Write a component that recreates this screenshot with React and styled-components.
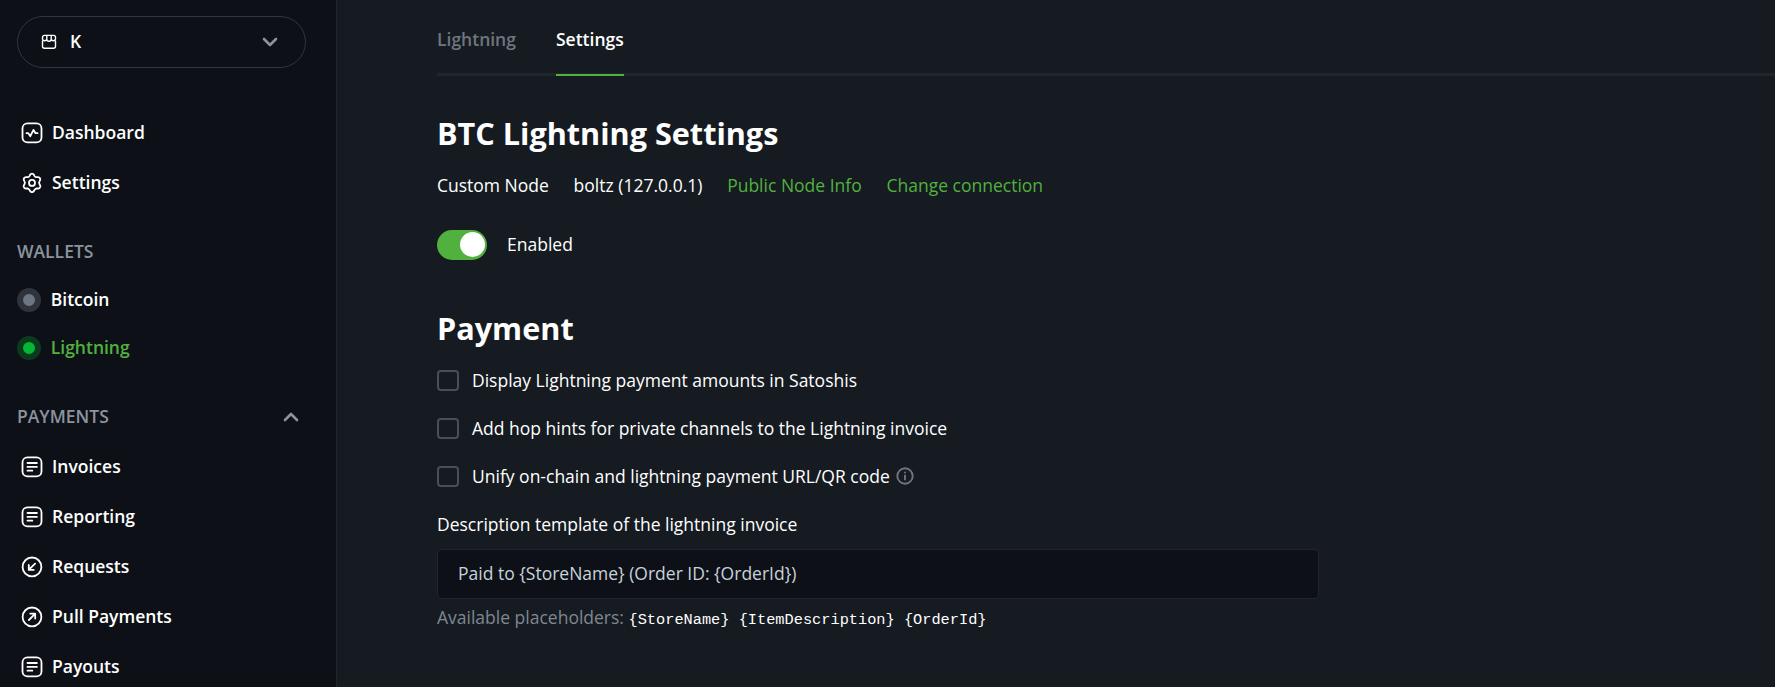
import React from "react";
import styled, { createGlobalStyle, css } from "styled-components";

const c = {
  side: "#0d1117",
  bg: "#161b22",
  line: "#21262d",
  pill: "#30363d",
  muted: "#8b949e",
  dim: "#6e7681",
  green: "#51b13e",
};

const Global = createGlobalStyle`
  * { box-sizing: border-box; }
  body {
    margin: 0;
    background: ${c.bg};
    color: #fff;
    font: 400 17.5px/26px "Open Sans", sans-serif;
    overflow: hidden;
  }
`;

const Page = styled.div`
  display: flex;
  height: 100vh;
  overflow: hidden;
`;

const Sidebar = styled.nav`
  flex: none;
  width: 337px;
  padding: 16px 30px 0 17px;
  background: ${c.side};
  border-right: 1px solid ${c.line};
  font-weight: 600;
`;

const StoreSelector = styled.button`
  display: flex;
  align-items: center;
  width: 289px;
  height: 52px;
  padding: 0 27px 0 23px;
  border: 1px solid ${c.pill};
  border-radius: 26px;
  background: none;
  color: #fff;
  font: inherit;
`;

const StoreName = styled.span`
  flex: 1;
  margin: 0 0 2px 13px;
  text-align: left;
`;

const NavList = styled.ul`
  list-style: none;
  margin: ${(p) => p.$top || 0}px 0 0;
  padding: 0;
`;

const NavItem = styled.li`
  display: flex;
  align-items: center;
  gap: ${(p) => (p.$wallet ? 9.75 : 9)}px;
  height: ${(p) => (p.$wallet ? 48 : 50)}px;
  padding-left: ${(p) => (p.$wallet ? 0 : 4)}px;
  color: ${(p) => (p.$active ? c.green : "#fff")};
`;

const NavLabel = styled.span`
  margin-bottom: 2px;
`;

const SectionHeader = styled.header`
  display: flex;
  align-items: center;
  justify-content: space-between;
  height: 48px;
  margin-top: ${(p) => p.$top}px;
  padding-right: 7px;
  color: ${c.muted};
  text-transform: uppercase;
`;

const Status = styled.span`
  width: 24px;
  height: 24px;
  border: 6px solid ${(p) => (p.$on ? "#0a3b1e" : "#2f333b")};
  border-radius: 50%;
  background: ${(p) => (p.$on ? "#02b834" : "#6e7681")};
`;

const Main = styled.main`
  flex: 1;
  min-width: 0;
  padding-left: 100px;
`;

const Tabs = styled.div`
  display: flex;
  gap: 40px;
  height: 76px;
  border-bottom: 3px solid ${c.line};
`;

const Tab = styled.a`
  height: 76px;
  padding-top: 26px;
  font-weight: 600;
  color: ${(p) => (p.$active ? "#fff" : c.dim)};
  ${(p) => p.$active && css`border-bottom: 2px solid ${c.green};`}
`;

const Heading = styled.h2`
  margin: ${(p) => p.$top}px 0 0;
  font-size: 30.625px;
  line-height: 38px;
  font-weight: 700;
`;

const NodeInfo = styled.div`
  display: flex;
  gap: 24.75px;
  margin-top: 20px;
`;

const Link = styled.a`
  color: ${c.green};
`;

const ToggleRow = styled.label`
  display: flex;
  align-items: center;
  gap: 20px;
  margin-top: 32px;
`;

const ToggleLabel = styled.span`
  margin-bottom: 2px;
`;

const Switch = styled.span`
  display: flex;
  justify-content: flex-end;
  width: 50px;
  height: 30px;
  padding: 2px;
  border-radius: 15px;
  background: ${c.green};
  &::after {
    content: "";
    width: 25px;
    height: 25px;
    border-radius: 50%;
    background: #fff;
  }
`;

const Options = styled.div`
  margin-top: 9px;
`;

const Option = styled.label`
  display: flex;
  align-items: center;
  height: 48px;
`;

const Checkbox = styled.span`
  width: 22px;
  height: 21px;
  margin: 1px 13px 0 0;
  border: 2px solid #484d57;
  border-radius: 4px;
`;

const FieldLabel = styled.label`
  display: block;
  margin-top: 11px;
`;

const Input = styled.input`
  display: block;
  width: 882px;
  height: 50px;
  margin-top: 12px;
  padding: 0 20px 2px;
  border: 1px solid ${c.line};
  border-radius: 5px;
  background: ${c.side};
  color: #c9d1d9;
  font: inherit;
  outline: none;
`;

const Help = styled.p`
  margin: 5px 0 0;
  color: #7f8791;
`;

const Code = styled.code`
  color: #fff;
  font: 15.3125px "Liberation Mono", monospace;
`;

const Icon = ({ size = 22, view, w = 1.7, children, ...rest }) => (
  <svg
    width={size}
    height={size}
    viewBox={view || `0 0 ${size} ${size}`}
    fill="none"
    stroke="currentColor"
    strokeWidth={w}
    strokeLinecap="round"
    strokeLinejoin="round"
    style={{ flex: "none" }}
    {...rest}
  >
    {children}
  </svg>
);

const NavIcon = (props) => <Icon view="-0.5 -0.4 22 22" w={1.8} {...props} />;

const Frame = () => <rect x="1" y="1" width="19" height="19" rx="5" />;

const icons = {
  dashboard: (
    <NavIcon>
      <Frame />
      <path d="M5 10.8h1.8l2 3 3.2-6.3 2 3.3h2" />
    </NavIcon>
  ),
  settings: (
    <NavIcon>
      <path d="M8.6 1.5a2.2 2.2 0 0 1 3.8 0l.7 1.3a2.2 2.2 0 0 0 2.1 1.1l1.4-.1a2.2 2.2 0 0 1 1.9 3.3l-.6 1.2a2.2 2.2 0 0 0 0 2.3l.7 1.3a2.2 2.2 0 0 1-1.9 3.3h-1.4a2.2 2.2 0 0 0-2 1.1l-.9 1.4a2.2 2.2 0 0 1-3.8 0l-.9-1.4a2.2 2.2 0 0 0-2-1.1H4.3a2.2 2.2 0 0 1-1.9-3.3l.7-1.3a2.2 2.2 0 0 0 0-2.3l-.6-1.2A2.2 2.2 0 0 1 4.4 3.8l1.4.1A2.2 2.2 0 0 0 7.9 2.8Z" transform="translate(0 .9)" />
      <circle cx="10.5" cy="10.5" r="3" />
    </NavIcon>
  ),
  doc: (
    <NavIcon>
      <Frame />
      <path d="M6 6.6h9.4M6 10.5h9.4M6 14.3h4.8" />
    </NavIcon>
  ),
  request: (
    <NavIcon>
      <circle cx="10.5" cy="10.5" r="9.4" />
      <path d="M13.6 7.2 7.5 13.3M7.3 8.6v4.9h4.9" />
    </NavIcon>
  ),
  pull: (
    <NavIcon>
      <circle cx="10.5" cy="10.5" r="9.4" />
      <path d="M7.4 13.6 13.5 7.5M8.8 7.3h4.9v4.9" />
    </NavIcon>
  ),
};

const StoreIcon = () => (
  <Icon size={16} w={1.4}>
    <path d="M1.5 7v5.2a2 2 0 0 0 2 2h9a2 2 0 0 0 2-2V7M3.4 1.4h9.2a1.9 1.9 0 0 1 1.9 1.9V5a2.2 2.2 0 0 1-4.3 0 2.2 2.2 0 0 1-4.4 0A2.2 2.2 0 0 1 1.5 5V3.3a1.9 1.9 0 0 1 1.9-1.9ZM5.8 1.4V5M10.2 1.4V5" />
  </Icon>
);

const Chevron = ({ up }) => (
  <Icon size={16} w={2.6} color={c.muted}>
    <path d={up ? "M2 11 8 5l6 6" : "m2 5 6 6 6-6"} />
  </Icon>
);

const InfoIcon = () => (
  <Icon size={18} w={1.9} color={c.dim} style={{ flex: "none", marginLeft: 6 }}>
    <circle cx="9" cy="9" r="7.7" />
    <path d="M9 8.4v4.2M9 5.5v.1" />
  </Icon>
);

const storeNav = [
  ["Dashboard", "dashboard"],
  ["Settings", "settings"],
];
const paymentNav = [
  ["Invoices", "doc"],
  ["Reporting", "doc"],
  ["Requests", "request"],
  ["Pull Payments", "pull"],
  ["Payouts", "doc"],
];

const NavItems = ({ items }) =>
  items.map(([label, icon]) => (
    <NavItem key={label}>
      {icons[icon]}
      <NavLabel>{label}</NavLabel>
    </NavItem>
  ));

export default function App() {
  return (
    <Page>
      <Global />
      <Sidebar>
        <StoreSelector>
          <StoreIcon />
          <StoreName>K</StoreName>
          <Chevron />
        </StoreSelector>
        <NavList $top={40}>
          <NavItems items={storeNav} />
        </NavList>
        <SectionHeader $top={20}>
          <NavLabel>Wallets</NavLabel>
        </SectionHeader>
        <NavList>
          <NavItem $wallet>
            <Status />
            <NavLabel>Bitcoin</NavLabel>
          </NavItem>
          <NavItem $wallet $active>
            <Status $on />
            <NavLabel>Lightning</NavLabel>
          </NavItem>
        </NavList>
        <SectionHeader $top={21}>
          <NavLabel>Payments</NavLabel>
          <Chevron up />
        </SectionHeader>
        <NavList $top={1}>
          <NavItems items={paymentNav} />
        </NavList>
      </Sidebar>
      <Main>
        <Tabs>
          <Tab>Lightning</Tab>
          <Tab $active>Settings</Tab>
        </Tabs>
        <Heading $top={38}>BTC Lightning Settings</Heading>
        <NodeInfo>
          <span>Custom Node</span>
          <span>boltz (127.0.0.1)</span>
          <Link>Public Node Info</Link>
          <Link>Change connection</Link>
        </NodeInfo>
        <ToggleRow>
          <Switch />
          <ToggleLabel>Enabled</ToggleLabel>
        </ToggleRow>
        <Heading $top={49}>Payment</Heading>
        <Options>
          <Option>
            <Checkbox />
            Display Lightning payment amounts in Satoshis
          </Option>
          <Option>
            <Checkbox />
            Add hop hints for private channels to the Lightning invoice
          </Option>
          <Option>
            <Checkbox />
            Unify on-chain and lightning payment URL/QR code
            <InfoIcon />
          </Option>
        </Options>
        <FieldLabel>Description template of the lightning invoice</FieldLabel>
        <Input defaultValue="Paid to {StoreName} (Order ID: {OrderId})" />
        <Help>
          Available placeholders: <Code>{"{StoreName} {ItemDescription} {OrderId}"}</Code>
        </Help>
      </Main>
    </Page>
  );
}
